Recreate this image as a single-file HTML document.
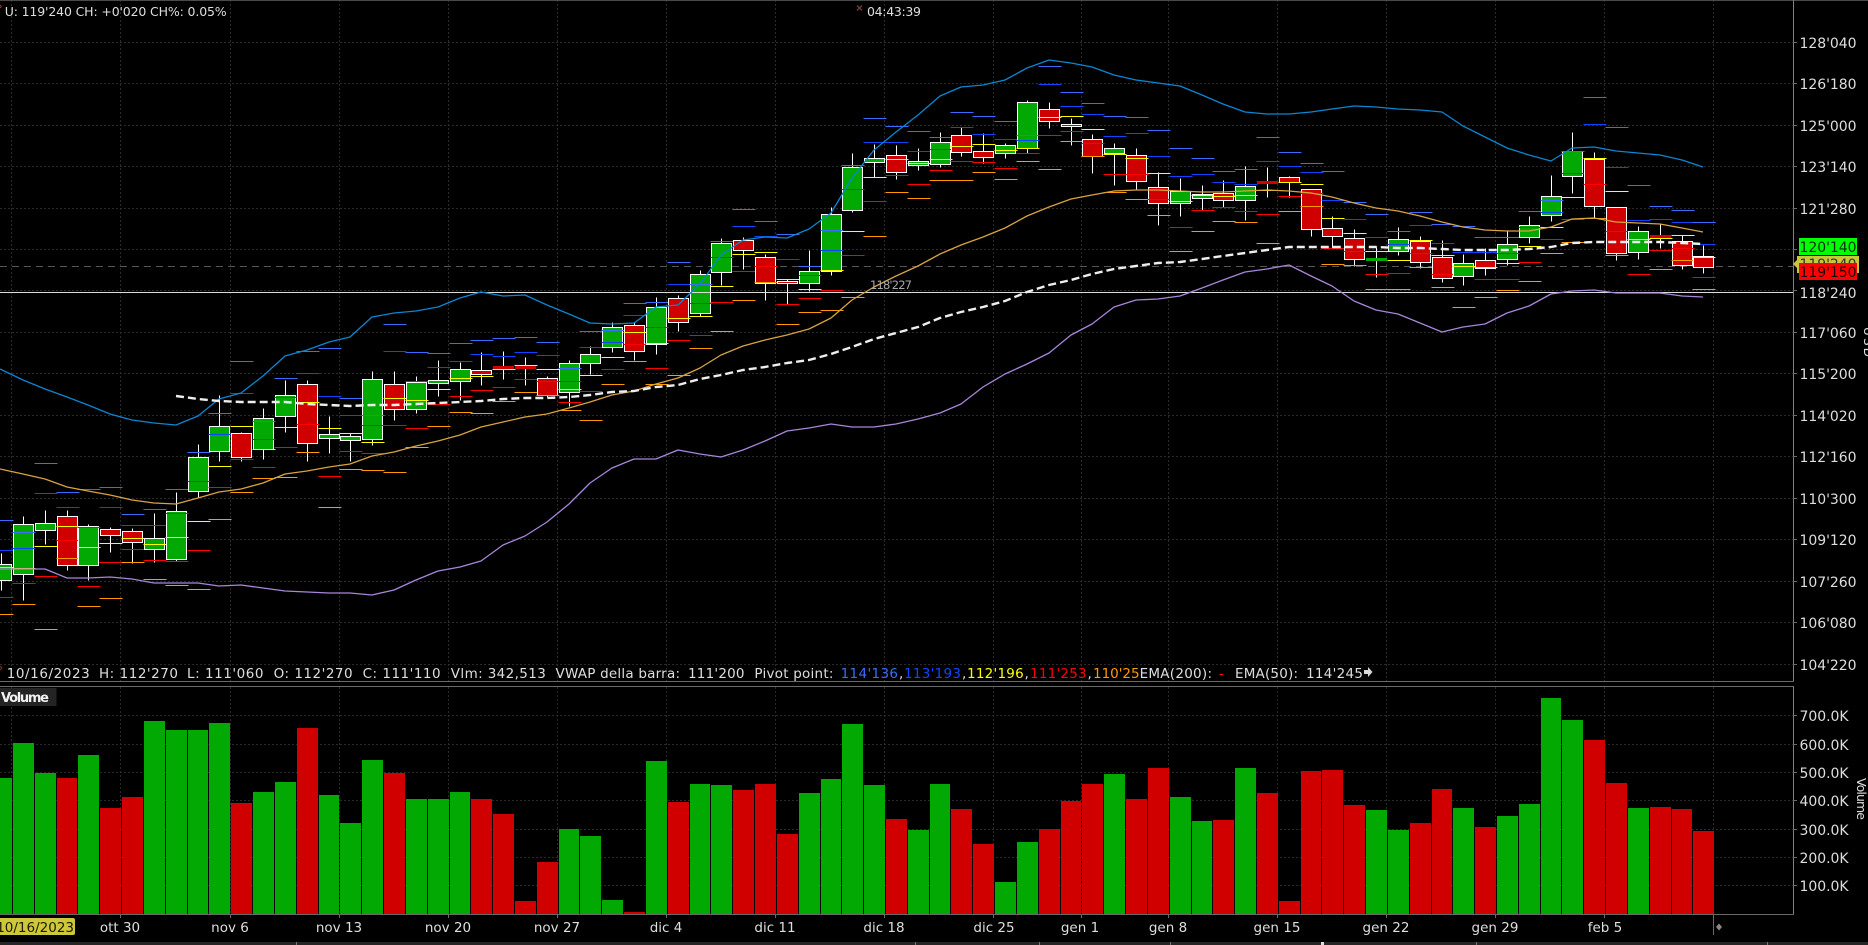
<!DOCTYPE html>
<html><head><meta charset="utf-8"><title>Chart</title>
<style>
html,body{margin:0;padding:0;background:#000;width:1868px;height:945px;overflow:hidden}
svg{position:absolute;left:0;top:0;display:block}
text{font-family:"DejaVu Sans","Liberation Sans",sans-serif;fill:#dedede;font-size:13.5px}
.gr path{stroke:#2b2b2b;stroke-width:1;stroke-dasharray:2 2;fill:none}
.cs{shape-rendering:crispEdges}
.cs path{fill:none;stroke-width:1}
.cs .w{stroke:#fff}
.cs .g{fill:#03a903;stroke:#fff}
.cs .r{fill:#d00000;stroke:#fff}
.cs .gf{fill:#03a903;stroke:#03a903}
.cs .rf{fill:#d00000;stroke:#d00000}
.cs .a{stroke:#3a6cff}
.cs .b{stroke:#0f45ff}
.cs .c{stroke:#ffff00}
.cs .d{stroke:#ff0000}
.cs .e{stroke:#ff9900}
.ax text{font-size:14px}
</style></head><body>
<svg width="1868" height="945" viewBox="0 0 1868 945" xmlns="http://www.w3.org/2000/svg">
<rect width="1868" height="945" fill="#000"/>
<!-- grid -->
<g class="gr">
<path d="M0 42.5H1793M0 83.5H1793M0 125.5H1793M0 166.5H1793M0 208.5H1793M0 249.5H1793M0 290.5H1793M0 332.5H1793M0 373.5H1793M0 415.5H1793M0 456.5H1793M0 498.5H1793M0 539.5H1793M0 581.5H1793M0 622.5H1793M0 664.5H1793"/>
<path d="M11.5 0V681M120.5 0V681M230.5 0V681M339.5 0V681M448.5 0V681M557.5 0V681M666.5 0V681M775.5 0V681M884.5 0V681M993.5 0V681M1081.5 0V681M1168.5 0V681M1277.5 0V681M1386.5 0V681M1495.5 0V681M1604.5 0V681M1713.5 0V681"/>
<path d="M0 715.5H1793M0 744.5H1793M0 772.5H1793M0 800.5H1793M0 829.5H1793M0 857.5H1793M0 885.5H1793"/>
<path d="M11.5 687V914M120.5 687V914M230.5 687V914M339.5 687V914M448.5 687V914M557.5 687V914M666.5 687V914M775.5 687V914M884.5 687V914M993.5 687V914M1081.5 687V914M1168.5 687V914M1277.5 687V914M1386.5 687V914M1495.5 687V914M1604.5 687V914M1713.5 687V914"/>
</g>
<path d="M0 266.5H1793" stroke="#555" stroke-width="1" stroke-dasharray="7 5" fill="none" shape-rendering="crispEdges"/>
<!-- candles -->
<g class="cs">
<g transform="translate(1.5 .5)"><path class="w" d="M0 553V590"/><path class="g" d="M-10 564h20v16h-20z"/><path class="a" d="M-11 520h23"/><path class="b" d="M-11 550h23"/><path class="c" d="M-11 567h23"/><path class="d" d="M-11 597h23"/><path class="e" d="M-11 614h23"/></g>
<g transform="translate(23.5 .5)"><path class="w" d="M0 516V600"/><path class="g" d="M-10 524h20v50h-20z"/><path class="a" d="M-11 532h23"/><path class="b" d="M-11 548h23"/><path class="c" d="M-11 568h23"/><path class="d" d="M-11 583h23"/><path class="e" d="M-11 604h23"/></g>
<g transform="translate(45.5 .5)"><path class="w" d="M0 510V544"/><path class="g" d="M-10 523h20v7h-20z"/><path class="a" d="M-11 463h23"/><path class="b" d="M-11 493h23"/><path class="c" d="M-11 546h23"/><path class="d" d="M-11 576h23"/><path class="e" d="M-11 629h23"/></g>
<g transform="translate(67.5 .5)"><path class="w" d="M0 510V570"/><path class="r" d="M-10 516h20v49h-20z"/><path class="a" d="M-11 492h23"/><path class="b" d="M-11 507h23"/><path class="c" d="M-11 526h23"/><path class="d" d="M-11 540h23"/><path class="e" d="M-11 558h23"/></g>
<g transform="translate(88.5 .5)"><path class="w" d="M0 524V580"/><path class="g" d="M-10 526h20v39h-20z"/><path class="a" d="M-11 489h23"/><path class="b" d="M-11 527h23"/><path class="c" d="M-11 547h23"/><path class="d" d="M-11 586h23"/><path class="e" d="M-11 606h23"/></g>
<g transform="translate(110.5 .5)"><path class="w" d="M0 527V552"/><path class="r" d="M-10 529h20v6h-20z"/><path class="a" d="M-11 487h23"/><path class="b" d="M-11 507h23"/><path class="c" d="M-11 543h23"/><path class="d" d="M-11 562h23"/><path class="e" d="M-11 598h23"/></g>
<g transform="translate(132.5 .5)"><path class="w" d="M0 528V563"/><path class="r" d="M-10 531h20v11h-20z"/><path class="a" d="M-11 514h23"/><path class="b" d="M-11 525h23"/><path class="c" d="M-11 538h23"/><path class="d" d="M-11 549h23"/><path class="e" d="M-11 562h23"/></g>
<g transform="translate(154.5 .5)"><path class="w" d="M0 513V562"/><path class="g" d="M-10 538h20v11h-20z"/><path class="a" d="M-11 509h23"/><path class="b" d="M-11 525h23"/><path class="c" d="M-11 544h23"/><path class="d" d="M-11 560h23"/><path class="e" d="M-11 579h23"/></g>
<g transform="translate(176.5 .5)"><path class="w" d="M0 492V561"/><path class="g" d="M-10 511h20v48h-20z"/><path class="a" d="M-11 489h23"/><path class="b" d="M-11 513h23"/><path class="c" d="M-11 537h23"/><path class="d" d="M-11 561h23"/><path class="e" d="M-11 585h23"/></g>
<g transform="translate(198.5 .5)"><path class="w" d="M0 444V498"/><path class="g" d="M-10 457h20v34h-20z"/><path class="a" d="M-11 452h23"/><path class="b" d="M-11 481h23"/><path class="c" d="M-11 521h23"/><path class="d" d="M-11 550h23"/><path class="e" d="M-11 589h23"/></g>
<g transform="translate(219.5 .5)"><path class="w" d="M0 395V461"/><path class="g" d="M-10 426h20v25h-20z"/><path class="a" d="M-11 413h23"/><path class="b" d="M-11 434h23"/><path class="c" d="M-11 466h23"/><path class="d" d="M-11 487h23"/><path class="e" d="M-11 519h23"/></g>
<g transform="translate(241.5 .5)"><path class="w" d="M0 432V461"/><path class="r" d="M-10 433h20v24h-20z"/><path class="a" d="M-11 361h23"/><path class="b" d="M-11 393h23"/><path class="c" d="M-11 426h23"/><path class="d" d="M-11 459h23"/><path class="e" d="M-11 492h23"/></g>
<g transform="translate(263.5 .5)"><path class="w" d="M0 408V459"/><path class="g" d="M-10 418h20v31h-20z"/><path class="a" d="M-11 421h23"/><path class="b" d="M-11 439h23"/><path class="c" d="M-11 449h23"/><path class="d" d="M-11 467h23"/><path class="e" d="M-11 478h23"/></g>
<g transform="translate(285.5 .5)"><path class="w" d="M0 380V432"/><path class="g" d="M-10 395h20v21h-20z"/><path class="a" d="M-11 378h23"/><path class="b" d="M-11 397h23"/><path class="c" d="M-11 427h23"/><path class="d" d="M-11 447h23"/><path class="e" d="M-11 477h23"/></g>
<g transform="translate(307.5 .5)"><path class="w" d="M0 380V461"/><path class="r" d="M-10 384h20v59h-20z"/><path class="a" d="M-11 351h23"/><path class="b" d="M-11 373h23"/><path class="c" d="M-11 402h23"/><path class="d" d="M-11 424h23"/><path class="e" d="M-11 452h23"/></g>
<g transform="translate(329.5 .5)"><path class="w" d="M0 416V453"/><path class="g" d="M-10 434h20v4h-20z"/><path class="a" d="M-11 348h23"/><path class="b" d="M-11 396h23"/><path class="c" d="M-11 428h23"/><path class="d" d="M-11 476h23"/><path class="e" d="M-11 507h23"/></g>
<g transform="translate(350.5 .5)"><path class="w" d="M0 433V461"/><path class="g" d="M-10 436h20v4h-20z"/><path class="a" d="M-11 398h23"/><path class="b" d="M-11 415h23"/><path class="c" d="M-11 433h23"/><path class="d" d="M-11 451h23"/><path class="e" d="M-11 469h23"/></g>
<g transform="translate(372.5 .5)"><path class="w" d="M0 371V445"/><path class="g" d="M-10 379h20v60h-20z"/><path class="a" d="M-11 415h23"/><path class="b" d="M-11 425h23"/><path class="c" d="M-11 442h23"/><path class="d" d="M-11 453h23"/><path class="e" d="M-11 470h23"/></g>
<g transform="translate(394.5 .5)"><path class="w" d="M0 371V420"/><path class="r" d="M-10 384h20v25h-20z"/><path class="a" d="M-11 324h23"/><path class="b" d="M-11 351h23"/><path class="c" d="M-11 398h23"/><path class="d" d="M-11 425h23"/><path class="e" d="M-11 472h23"/></g>
<g transform="translate(416.5 .5)"><path class="w" d="M0 376V413"/><path class="g" d="M-10 382h20v27h-20z"/><path class="a" d="M-11 352h23"/><path class="b" d="M-11 381h23"/><path class="c" d="M-11 400h23"/><path class="d" d="M-11 428h23"/><path class="e" d="M-11 447h23"/></g>
<g transform="translate(438.5 .5)"><path class="w" d="M0 360V396"/><path class="g" d="M-10 380h20v3h-20z"/><path class="a" d="M-11 353h23"/><path class="b" d="M-11 367h23"/><path class="c" d="M-11 389h23"/><path class="d" d="M-11 404h23"/><path class="e" d="M-11 426h23"/></g>
<g transform="translate(460.5 .5)"><path class="w" d="M0 362V400"/><path class="g" d="M-10 369h20v12h-20z"/><path class="a" d="M-11 343h23"/><path class="b" d="M-11 361h23"/><path class="c" d="M-11 378h23"/><path class="d" d="M-11 396h23"/><path class="e" d="M-11 412h23"/></g>
<g transform="translate(481.5 .5)"><path class="w" d="M0 352V385"/><path class="r" d="M-10 370h20v4h-20z"/><path class="a" d="M-11 340h23"/><path class="b" d="M-11 354h23"/><path class="c" d="M-11 376h23"/><path class="d" d="M-11 390h23"/><path class="e" d="M-11 413h23"/></g>
<g transform="translate(503.5 .5)"><path class="w" d="M0 351V379"/><path class="rf" d="M-10 366h20v2h-20z"/><path class="a" d="M-11 338h23"/><path class="b" d="M-11 356h23"/><path class="c" d="M-11 369h23"/><path class="d" d="M-11 387h23"/><path class="e" d="M-11 401h23"/></g>
<g transform="translate(525.5 .5)"><path class="w" d="M0 357V385"/><path class="rf" d="M-10 365h20v3h-20z"/><path class="a" d="M-11 337h23"/><path class="b" d="M-11 352h23"/><path class="c" d="M-11 365h23"/><path class="d" d="M-11 379h23"/><path class="e" d="M-11 392h23"/></g>
<g transform="translate(547.5 .5)"><path class="w" d="M0 376V397"/><path class="r" d="M-10 378h20v17h-20z"/><path class="a" d="M-11 342h23"/><path class="b" d="M-11 355h23"/><path class="c" d="M-11 369h23"/><path class="d" d="M-11 381h23"/><path class="e" d="M-11 395h23"/></g>
<g transform="translate(569.5 .5)"><path class="w" d="M0 360V406"/><path class="g" d="M-10 363h20v29h-20z"/><path class="a" d="M-11 368h23"/><path class="b" d="M-11 381h23"/><path class="c" d="M-11 389h23"/><path class="d" d="M-11 402h23"/><path class="e" d="M-11 410h23"/></g>
<g transform="translate(590.5 .5)"><path class="w" d="M0 346V374"/><path class="g" d="M-10 354h20v9h-20z"/><path class="a" d="M-11 331h23"/><path class="b" d="M-11 347h23"/><path class="c" d="M-11 375h23"/><path class="d" d="M-11 391h23"/><path class="e" d="M-11 420h23"/></g>
<g transform="translate(612.5 .5)"><path class="w" d="M0 322V352"/><path class="g" d="M-10 327h20v20h-20z"/><path class="a" d="M-11 330h23"/><path class="b" d="M-11 342h23"/><path class="c" d="M-11 357h23"/><path class="d" d="M-11 369h23"/><path class="e" d="M-11 384h23"/></g>
<g transform="translate(634.5 .5)"><path class="w" d="M0 322V360"/><path class="r" d="M-10 325h20v26h-20z"/><path class="a" d="M-11 303h23"/><path class="b" d="M-11 315h23"/><path class="c" d="M-11 332h23"/><path class="d" d="M-11 344h23"/><path class="e" d="M-11 361h23"/></g>
<g transform="translate(656.5 .5)"><path class="w" d="M0 297V354"/><path class="g" d="M-10 307h20v37h-20z"/><path class="a" d="M-11 302h23"/><path class="b" d="M-11 327h23"/><path class="c" d="M-11 343h23"/><path class="d" d="M-11 368h23"/><path class="e" d="M-11 384h23"/></g>
<g transform="translate(678.5 .5)"><path class="w" d="M0 295V331"/><path class="r" d="M-10 298h20v24h-20z"/><path class="a" d="M-11 262h23"/><path class="b" d="M-11 284h23"/><path class="c" d="M-11 318h23"/><path class="d" d="M-11 340h23"/><path class="e" d="M-11 375h23"/></g>
<g transform="translate(700.5 .5)"><path class="w" d="M0 270V316"/><path class="g" d="M-10 274h20v39h-20z"/><path class="a" d="M-11 284h23"/><path class="b" d="M-11 303h23"/><path class="c" d="M-11 316h23"/><path class="d" d="M-11 335h23"/><path class="e" d="M-11 348h23"/></g>
<g transform="translate(721.5 .5)"><path class="w" d="M0 238V285"/><path class="g" d="M-10 243h20v29h-20z"/><path class="a" d="M-11 241h23"/><path class="b" d="M-11 257h23"/><path class="c" d="M-11 286h23"/><path class="d" d="M-11 302h23"/><path class="e" d="M-11 331h23"/></g>
<g transform="translate(743.5 .5)"><path class="w" d="M0 237V269"/><path class="r" d="M-10 240h20v10h-20z"/><path class="a" d="M-11 209h23"/><path class="b" d="M-11 226h23"/><path class="c" d="M-11 254h23"/><path class="d" d="M-11 271h23"/><path class="e" d="M-11 300h23"/></g>
<g transform="translate(765.5 .5)"><path class="w" d="M0 254V300"/><path class="r" d="M-10 257h20v26h-20z"/><path class="a" d="M-11 221h23"/><path class="b" d="M-11 236h23"/><path class="c" d="M-11 252h23"/><path class="d" d="M-11 266h23"/><path class="e" d="M-11 282h23"/></g>
<g transform="translate(787.5 .5)"><path class="w" d="M0 279V304"/><path class="r" d="M-10 281h20v2h-20z"/><path class="a" d="M-11 234h23"/><path class="b" d="M-11 259h23"/><path class="c" d="M-11 279h23"/><path class="d" d="M-11 304h23"/><path class="e" d="M-11 324h23"/></g>
<g transform="translate(809.5 .5)"><path class="w" d="M0 250V291"/><path class="g" d="M-10 271h20v12h-20z"/><path class="a" d="M-11 266h23"/><path class="b" d="M-11 275h23"/><path class="c" d="M-11 289h23"/><path class="d" d="M-11 298h23"/><path class="e" d="M-11 312h23"/></g>
<g transform="translate(831.5 .5)"><path class="w" d="M0 207V275"/><path class="g" d="M-10 214h20v57h-20z"/><path class="a" d="M-11 230h23"/><path class="b" d="M-11 250h23"/><path class="c" d="M-11 270h23"/><path class="d" d="M-11 290h23"/><path class="e" d="M-11 310h23"/></g>
<g transform="translate(852.5 .5)"><path class="w" d="M0 153V212"/><path class="g" d="M-10 167h20v43h-20z"/><path class="a" d="M-11 165h23"/><path class="b" d="M-11 189h23"/><path class="c" d="M-11 231h23"/><path class="d" d="M-11 255h23"/><path class="e" d="M-11 297h23"/></g>
<g transform="translate(874.5 .5)"><path class="w" d="M0 144V177"/><path class="g" d="M-10 158h20v4h-20z"/><path class="a" d="M-11 118h23"/><path class="b" d="M-11 142h23"/><path class="c" d="M-11 177h23"/><path class="d" d="M-11 201h23"/><path class="e" d="M-11 236h23"/></g>
<g transform="translate(896.5 .5)"><path class="w" d="M0 145V179"/><path class="r" d="M-10 155h20v17h-20z"/><path class="a" d="M-11 126h23"/><path class="b" d="M-11 142h23"/><path class="c" d="M-11 159h23"/><path class="d" d="M-11 175h23"/><path class="e" d="M-11 192h23"/></g>
<g transform="translate(918.5 .5)"><path class="w" d="M0 148V170"/><path class="g" d="M-10 161h20v4h-20z"/><path class="a" d="M-11 131h23"/><path class="b" d="M-11 151h23"/><path class="c" d="M-11 163h23"/><path class="d" d="M-11 184h23"/><path class="e" d="M-11 198h23"/></g>
<g transform="translate(940.5 .5)"><path class="w" d="M0 132V167"/><path class="g" d="M-10 142h20v22h-20z"/><path class="a" d="M-11 137h23"/><path class="b" d="M-11 149h23"/><path class="c" d="M-11 159h23"/><path class="d" d="M-11 170h23"/><path class="e" d="M-11 180h23"/></g>
<g transform="translate(961.5 .5)"><path class="w" d="M0 127V156"/><path class="r" d="M-10 135h20v17h-20z"/><path class="a" d="M-11 112h23"/><path class="b" d="M-11 127h23"/><path class="c" d="M-11 146h23"/><path class="d" d="M-11 161h23"/><path class="e" d="M-11 180h23"/></g>
<g transform="translate(983.5 .5)"><path class="w" d="M0 133V163"/><path class="r" d="M-10 151h20v6h-20z"/><path class="a" d="M-11 116h23"/><path class="b" d="M-11 134h23"/><path class="c" d="M-11 144h23"/><path class="d" d="M-11 162h23"/><path class="e" d="M-11 172h23"/></g>
<g transform="translate(1005.5 .5)"><path class="w" d="M0 143V158"/><path class="g" d="M-10 145h20v8h-20z"/><path class="a" d="M-11 121h23"/><path class="b" d="M-11 139h23"/><path class="c" d="M-11 150h23"/><path class="d" d="M-11 168h23"/><path class="e" d="M-11 179h23"/></g>
<g transform="translate(1027.5 .5)"><path class="w" d="M0 100V153"/><path class="g" d="M-10 102h20v46h-20z"/><path class="a" d="M-11 135h23"/><path class="b" d="M-11 140h23"/><path class="c" d="M-11 148h23"/><path class="d" d="M-11 153h23"/><path class="e" d="M-11 161h23"/></g>
<g transform="translate(1049.5 .5)"><path class="w" d="M0 102V128"/><path class="r" d="M-10 109h20v12h-20z"/><path class="a" d="M-11 66h23"/><path class="b" d="M-11 84h23"/><path class="c" d="M-11 117h23"/><path class="d" d="M-11 135h23"/><path class="e" d="M-11 169h23"/></g>
<g transform="translate(1071.5 .5)"><path class="w" d="M0 118V145"/><path class="r" d="M-10 124h20v2h-20z"/><path class="a" d="M-11 92h23"/><path class="b" d="M-11 106h23"/><path class="c" d="M-11 116h23"/><path class="d" d="M-11 131h23"/><path class="e" d="M-11 141h23"/></g>
<g transform="translate(1092.5 .5)"><path class="w" d="M0 134V173"/><path class="r" d="M-10 139h20v17h-20z"/><path class="a" d="M-11 103h23"/><path class="b" d="M-11 114h23"/><path class="c" d="M-11 129h23"/><path class="d" d="M-11 143h23"/><path class="e" d="M-11 156h23"/></g>
<g transform="translate(1114.5 .5)"><path class="w" d="M0 143V185"/><path class="g" d="M-10 148h20v5h-20z"/><path class="a" d="M-11 116h23"/><path class="b" d="M-11 136h23"/><path class="c" d="M-11 154h23"/><path class="d" d="M-11 174h23"/><path class="e" d="M-11 192h23"/></g>
<g transform="translate(1136.5 .5)"><path class="w" d="M0 148V190"/><path class="r" d="M-10 155h20v26h-20z"/><path class="a" d="M-11 117h23"/><path class="b" d="M-11 133h23"/><path class="c" d="M-11 158h23"/><path class="d" d="M-11 174h23"/><path class="e" d="M-11 199h23"/></g>
<g transform="translate(1158.5 .5)"><path class="w" d="M0 172V225"/><path class="r" d="M-10 187h20v16h-20z"/><path class="a" d="M-11 130h23"/><path class="b" d="M-11 156h23"/><path class="c" d="M-11 173h23"/><path class="d" d="M-11 199h23"/><path class="e" d="M-11 215h23"/></g>
<g transform="translate(1180.5 .5)"><path class="w" d="M0 178V216"/><path class="g" d="M-10 191h20v12h-20z"/><path class="a" d="M-11 148h23"/><path class="b" d="M-11 176h23"/><path class="c" d="M-11 201h23"/><path class="d" d="M-11 227h23"/><path class="e" d="M-11 251h23"/></g>
<g transform="translate(1202.5 .5)"><path class="w" d="M0 185V210"/><path class="g" d="M-10 194h20v4h-20z"/><path class="a" d="M-11 158h23"/><path class="b" d="M-11 174h23"/><path class="c" d="M-11 195h23"/><path class="d" d="M-11 210h23"/><path class="e" d="M-11 231h23"/></g>
<g transform="translate(1223.5 .5)"><path class="w" d="M0 180V207"/><path class="r" d="M-10 193h20v7h-20z"/><path class="a" d="M-11 171h23"/><path class="b" d="M-11 182h23"/><path class="c" d="M-11 196h23"/><path class="d" d="M-11 207h23"/><path class="e" d="M-11 221h23"/></g>
<g transform="translate(1245.5 .5)"><path class="w" d="M0 166V220"/><path class="g" d="M-10 186h20v14h-20z"/><path class="a" d="M-11 169h23"/><path class="b" d="M-11 184h23"/><path class="c" d="M-11 195h23"/><path class="d" d="M-11 211h23"/><path class="e" d="M-11 222h23"/></g>
<g transform="translate(1267.5 .5)"><path class="w" d="M0 167V197"/><path class="rf" d="M-10 181h20v2h-20z"/><path class="a" d="M-11 137h23"/><path class="b" d="M-11 161h23"/><path class="c" d="M-11 190h23"/><path class="d" d="M-11 214h23"/><path class="e" d="M-11 243h23"/></g>
<g transform="translate(1289.5 .5)"><path class="w" d="M0 176V197"/><path class="r" d="M-10 177h20v5h-20z"/><path class="a" d="M-11 152h23"/><path class="b" d="M-11 166h23"/><path class="c" d="M-11 182h23"/><path class="d" d="M-11 196h23"/><path class="e" d="M-11 211h23"/></g>
<g transform="translate(1311.5 .5)"><path class="w" d="M0 189V236"/><path class="r" d="M-10 189h20v40h-20z"/><path class="a" d="M-11 163h23"/><path class="b" d="M-11 172h23"/><path class="c" d="M-11 184h23"/><path class="d" d="M-11 193h23"/><path class="e" d="M-11 206h23"/></g>
<g transform="translate(1332.5 .5)"><path class="w" d="M0 216V248"/><path class="r" d="M-10 228h20v8h-20z"/><path class="a" d="M-11 171h23"/><path class="b" d="M-11 200h23"/><path class="c" d="M-11 218h23"/><path class="d" d="M-11 248h23"/><path class="e" d="M-11 264h23"/></g>
<g transform="translate(1354.5 .5)"><path class="w" d="M0 229V266"/><path class="r" d="M-10 238h20v21h-20z"/><path class="a" d="M-11 202h23"/><path class="b" d="M-11 219h23"/><path class="c" d="M-11 233h23"/><path class="d" d="M-11 251h23"/><path class="e" d="M-11 265h23"/></g>
<g transform="translate(1376.5 .5)"><path class="w" d="M0 247V277"/><path class="gf" d="M-10 258h20v2h-20z"/><path class="a" d="M-11 214h23"/><path class="b" d="M-11 237h23"/><path class="c" d="M-11 251h23"/><path class="d" d="M-11 274h23"/><path class="e" d="M-11 289h23"/></g>
<g transform="translate(1398.5 .5)"><path class="w" d="M0 227V255"/><path class="g" d="M-10 239h20v12h-20z"/><path class="a" d="M-11 231h23"/><path class="b" d="M-11 244h23"/><path class="c" d="M-11 260h23"/><path class="d" d="M-11 273h23"/><path class="e" d="M-11 289h23"/></g>
<g transform="translate(1420.5 .5)"><path class="w" d="M0 236V268"/><path class="r" d="M-10 241h20v21h-20z"/><path class="a" d="M-11 212h23"/><path class="b" d="M-11 225h23"/><path class="c" d="M-11 240h23"/><path class="d" d="M-11 253h23"/><path class="e" d="M-11 267h23"/></g>
<g transform="translate(1442.5 .5)"><path class="w" d="M0 240V282"/><path class="r" d="M-10 257h20v21h-20z"/><path class="a" d="M-11 224h23"/><path class="b" d="M-11 243h23"/><path class="c" d="M-11 255h23"/><path class="d" d="M-11 274h23"/><path class="e" d="M-11 287h23"/></g>
<g transform="translate(1463.5 .5)"><path class="w" d="M0 254V285"/><path class="g" d="M-10 263h20v13h-20z"/><path class="a" d="M-11 226h23"/><path class="b" d="M-11 252h23"/><path class="c" d="M-11 266h23"/><path class="d" d="M-11 292h23"/><path class="e" d="M-11 307h23"/></g>
<g transform="translate(1485.5 .5)"><path class="w" d="M0 248V275"/><path class="r" d="M-10 260h20v8h-20z"/><path class="a" d="M-11 237h23"/><path class="b" d="M-11 252h23"/><path class="c" d="M-11 267h23"/><path class="d" d="M-11 279h23"/><path class="e" d="M-11 297h23"/></g>
<g transform="translate(1507.5 .5)"><path class="w" d="M0 230V265"/><path class="g" d="M-10 244h20v15h-20z"/><path class="a" d="M-11 237h23"/><path class="b" d="M-11 253h23"/><path class="c" d="M-11 263h23"/><path class="d" d="M-11 279h23"/><path class="e" d="M-11 290h23"/></g>
<g transform="translate(1529.5 .5)"><path class="w" d="M0 216V243"/><path class="g" d="M-10 225h20v12h-20z"/><path class="a" d="M-11 211h23"/><path class="b" d="M-11 227h23"/><path class="c" d="M-11 246h23"/><path class="d" d="M-11 262h23"/><path class="e" d="M-11 281h23"/></g>
<g transform="translate(1551.5 .5)"><path class="w" d="M0 175V221"/><path class="g" d="M-10 196h20v19h-20z"/><path class="a" d="M-11 200h23"/><path class="b" d="M-11 212h23"/><path class="c" d="M-11 227h23"/><path class="d" d="M-11 239h23"/><path class="e" d="M-11 253h23"/></g>
<g transform="translate(1572.5 .5)"><path class="w" d="M0 132V193"/><path class="g" d="M-10 151h20v25h-20z"/><path class="a" d="M-11 151h23"/><path class="b" d="M-11 173h23"/><path class="c" d="M-11 197h23"/><path class="d" d="M-11 219h23"/><path class="e" d="M-11 242h23"/></g>
<g transform="translate(1594.5 .5)"><path class="w" d="M0 152V217"/><path class="r" d="M-10 159h20v47h-20z"/><path class="a" d="M-11 97h23"/><path class="b" d="M-11 124h23"/><path class="c" d="M-11 158h23"/><path class="d" d="M-11 184h23"/><path class="e" d="M-11 218h23"/></g>
<g transform="translate(1616.5 .5)"><path class="w" d="M0 207V260"/><path class="r" d="M-10 207h20v46h-20z"/><path class="a" d="M-11 127h23"/><path class="b" d="M-11 167h23"/><path class="c" d="M-11 191h23"/><path class="d" d="M-11 231h23"/><path class="e" d="M-11 255h23"/></g>
<g transform="translate(1638.5 .5)"><path class="w" d="M0 226V259"/><path class="g" d="M-10 231h20v21h-20z"/><path class="a" d="M-11 185h23"/><path class="b" d="M-11 220h23"/><path class="c" d="M-11 239h23"/><path class="d" d="M-11 274h23"/></g>
<g transform="translate(1660.5 .5)"><path class="w" d="M0 223V248"/><path class="rf" d="M-10 235h20v2h-20z"/><path class="a" d="M-11 206h23"/><path class="b" d="M-11 219h23"/><path class="c" d="M-11 238h23"/><path class="d" d="M-11 250h23"/><path class="e" d="M-11 269h23"/></g>
<g transform="translate(1682.5 .5)"><path class="w" d="M0 235V269"/><path class="r" d="M-10 241h20v24h-20z"/><path class="a" d="M-11 210h23"/><path class="b" d="M-11 222h23"/><path class="c" d="M-11 235h23"/><path class="d" d="M-11 248h23"/><path class="e" d="M-11 260h23"/></g>
<g transform="translate(1703.5 .5)"><path class="w" d="M0 245V273"/><path class="r" d="M-10 256h20v11h-20z"/><path class="a" d="M-11 222h23"/><path class="b" d="M-11 244h23"/><path class="c" d="M-11 257h23"/><path class="d" d="M-11 277h23"/><path class="e" d="M-11 289h23"/></g>
</g>
<!-- horizontal white line -->
<path d="M0 292.5H1793" stroke="#dcdcdc" stroke-width="1" shape-rendering="crispEdges"/>
<!-- indicators -->
<g fill="none" stroke-linejoin="round">
<polyline stroke="#0a86d2" stroke-width="1.3" points="0,369 23,380 45,389 67,397 88,405 110,414 132,420 154,423 176,425 198,416 219,399 241,393 263,376 285,356 307,350 329,342 350,337 372,317 394,313 416,311 438,307 460,298 481,292 503,296 525,295 547,305 569,314 590,323 612,324 634,323 656,307 678,305 700,284 721,255 743,240 765,237 787,238 809,229 831,213 852,178 874,150 896,132 918,115 940,96 961,87 983,85 1005,80 1027,68 1049,60 1071,63 1092,67 1114,75 1136,80 1158,83 1180,86 1202,95 1223,104 1245,112 1267,114 1289,114 1311,112 1332,109 1354,106 1376,107 1398,109 1420,110 1442,112 1463,126 1485,137 1507,148 1529,155 1551,161 1572,148 1594,147 1616,151 1638,153 1660,155 1682,160 1703,167"/>
<polyline stroke="#d8a33f" stroke-width="1.3" points="0,469 23,474 45,479 67,487 88,491 110,495 132,500 154,503 176,504 198,498 219,492 241,489 263,483 285,474 307,471 329,467 350,464 372,456 394,452 416,446 438,441 460,435 481,427 503,422 525,417 547,414 569,408 590,402 612,395 634,391 656,384 678,378 700,368 721,355 743,346 765,340 787,335 809,329 831,318 852,300 874,287 896,276 918,266 940,254 961,245 983,237 1005,228 1027,216 1049,207 1071,199 1092,195 1114,191 1136,190 1158,190 1180,191 1202,192 1223,192 1245,191 1267,190 1289,191 1311,193 1332,197 1354,203 1376,208 1398,211 1420,216 1442,222 1463,227 1485,230 1507,231 1529,231 1551,227 1572,219 1594,218 1616,222 1638,223 1660,224 1682,228 1703,232"/>
<polyline stroke="#a885da" stroke-width="1.3" points="0,569 23,569 45,569 67,578 88,578 110,577 132,579 154,583 176,583 198,583 219,586 241,585 263,588 285,591 307,592 329,593 350,593 372,595 394,590 416,580 438,571 460,567 481,561 503,545 525,536 547,522 569,504 590,483 612,468 634,459 656,459 678,450 700,454 721,457 743,450 765,441 787,431 809,428 831,424 852,427 874,427 896,424 918,419 940,413 961,404 983,387 1005,374 1027,364 1049,353 1071,335 1092,324 1114,307 1136,300 1158,299 1180,296 1202,288 1223,280 1245,272 1267,269 1289,265 1311,276 1332,286 1354,301 1376,310 1398,314 1420,323 1442,332 1463,327 1485,324 1507,313 1529,306 1551,294 1572,291 1594,290 1616,293 1638,293 1660,293 1682,296 1703,297"/>
<polyline stroke="#eeeeee" stroke-width="2.4" stroke-dasharray="8 4" points="176,396 198,399 219,401 241,402 263,402 285,402 307,404 329,405 350,406 372,405 394,405 416,404 438,403 460,402 481,401 503,399 525,398 547,398 569,397 590,395 612,392 634,391 656,387 678,385 700,379 721,375 743,370 765,367 787,363 809,360 831,354 852,347 874,339 896,333 918,327 940,318 961,312 983,307 1005,301 1027,292 1049,285 1071,280 1092,274 1114,269 1136,266 1158,263 1180,262 1202,259 1223,256 1245,253 1267,250 1289,247 1311,247 1332,247 1354,247 1376,247 1398,248 1420,248 1442,249 1463,250 1485,250 1507,250 1529,249 1551,247 1572,243 1594,242 1616,242 1638,242 1660,242 1682,243 1703,244"/>
</g>
<!-- volume bars -->
<path fill="#03a903" shape-rendering="crispEdges" d="M-9 778h21V914h-21zM13 743h21V914h-21zM35 773h21V914h-21zM78 755h21V914h-21zM144 721h21V914h-21zM166 730h21V914h-21zM188 730h20V914h-20zM209 723h21V914h-21zM253 792h21V914h-21zM275 782h21V914h-21zM319 795h20V914h-20zM340 823h21V914h-21zM362 760h21V914h-21zM406 799h21V914h-21zM428 799h21V914h-21zM450 792h20V914h-20zM559 829h20V914h-20zM580 836h21V914h-21zM602 900h21V914h-21zM646 761h21V914h-21zM690 784h20V914h-20zM711 785h21V914h-21zM799 793h21V914h-21zM821 779h20V914h-20zM842 724h21V914h-21zM864 785h21V914h-21zM908 830h21V914h-21zM930 784h20V914h-20zM995 882h21V914h-21zM1017 842h21V914h-21zM1104 774h21V914h-21zM1170 797h21V914h-21zM1192 821h20V914h-20zM1235 768h21V914h-21zM1366 810h21V914h-21zM1388 830h21V914h-21zM1453 808h21V914h-21zM1497 816h21V914h-21zM1519 804h21V914h-21zM1541 698h20V914h-20zM1562 720h21V914h-21zM1628 808h21V914h-21z"/>
<path fill="#d00000" shape-rendering="crispEdges" d="M57 778h20V914h-20zM100 808h21V914h-21zM122 797h21V914h-21zM231 803h21V914h-21zM297 728h21V914h-21zM384 773h21V914h-21zM471 799h21V914h-21zM493 814h21V914h-21zM515 901h21V914h-21zM537 862h21V914h-21zM624 912h21V914h-21zM668 802h21V914h-21zM733 790h21V914h-21zM755 784h21V914h-21zM777 834h21V914h-21zM886 819h21V914h-21zM951 809h21V914h-21zM973 844h21V914h-21zM1039 829h21V914h-21zM1061 801h20V914h-20zM1082 784h21V914h-21zM1126 799h21V914h-21zM1148 768h21V914h-21zM1213 820h21V914h-21zM1257 793h21V914h-21zM1279 901h21V914h-21zM1301 771h20V914h-20zM1322 770h21V914h-21zM1344 805h21V914h-21zM1410 823h21V914h-21zM1432 789h20V914h-20zM1475 827h21V914h-21zM1584 740h21V914h-21zM1606 783h21V914h-21zM1650 807h21V914h-21zM1672 809h20V914h-20zM1693 831h21V914h-21z"/>
<!-- frame -->
<g stroke="#6a6a6a" stroke-width="1" fill="none" shape-rendering="crispEdges">
<path d="M0 .5H1868" stroke="#4a4a4a"/>
<path d="M0 681.5H1793.5M0 686.5H1793.5M0 914.5H1793.5" />
<path d="M1793.5 0V681.5M1793.5 686V914.5" stroke="#808080"/>
<path d="M1793 42.5h4M1793 83.5h4M1793 125.5h4M1793 166.5h4M1793 208.5h4M1793 249.5h4M1793 290.5h4M1793 332.5h4M1793 373.5h4M1793 415.5h4M1793 456.5h4M1793 498.5h4M1793 539.5h4M1793 581.5h4M1793 622.5h4M1793 664.5h4M1793 715.5h4M1793 744.5h4M1793 772.5h4M1793 800.5h4M1793 829.5h4M1793 857.5h4M1793 885.5h4"/>
<path d="M120.5 914v4M230.5 914v4M339.5 914v4M448.5 914v4M557.5 914v4M666.5 914v4M775.5 914v4M884.5 914v4M993.5 914v4M1081.5 914v4M1168.5 914v4M1277.5 914v4M1386.5 914v4M1495.5 914v4M1604.5 914v4M1713.5 914V935"/>
</g>
<!-- price axis labels -->
<g class="ax">
<text x="1799.5" y="48" textLength="57">128'040</text>
<text x="1799.5" y="89" textLength="57">126'180</text>
<text x="1799.5" y="131" textLength="57">125'000</text>
<text x="1799.5" y="172" textLength="57">123'140</text>
<text x="1799.5" y="214" textLength="57">121'280</text>
<text x="1799.5" y="298" textLength="57">118'240</text>
<text x="1799.5" y="338" textLength="57">117'060</text>
<text x="1799.5" y="379" textLength="57">115'200</text>
<text x="1799.5" y="421" textLength="57">114'020</text>
<text x="1799.5" y="462" textLength="57">112'160</text>
<text x="1799.5" y="504" textLength="57">110'300</text>
<text x="1799.5" y="545" textLength="57">109'120</text>
<text x="1799.5" y="587" textLength="57">107'260</text>
<text x="1799.5" y="628" textLength="57">106'080</text>
<text x="1799.5" y="670" textLength="57">104'220</text>
<text x="1799.5" y="721" textLength="49">700.0K</text>
<text x="1799.5" y="750" textLength="49">600.0K</text>
<text x="1799.5" y="778" textLength="49">500.0K</text>
<text x="1799.5" y="806" textLength="49">400.0K</text>
<text x="1799.5" y="835" textLength="49">300.0K</text>
<text x="1799.5" y="863" textLength="49">200.0K</text>
<text x="1799.5" y="891" textLength="49">100.0K</text>
</g>
<!-- price flags -->
<rect x="1799" y="238" width="58" height="17" fill="#00ff00"/>
<text x="1799.5" y="252" textLength="57" style="fill:#003300;font-size:14px">120'140</text>
<path d="M1793 264L1797 260V256H1859V273H1797V268Z" fill="#c8c83a"/>
<text x="1799.5" y="269" textLength="57" style="fill:#333;font-size:14px">119'240</text>
<rect x="1799" y="263" width="58" height="17" fill="#ff0000"/>
<text x="1799.5" y="277" textLength="57" style="fill:#220000;font-size:14px">119'150</text>
<!-- rotated axis titles -->
<text transform="translate(1864 327) rotate(90)" textLength="30" style="font-size:12px">USD</text>
<text transform="translate(1857 778) rotate(90)" textLength="42" style="font-size:12.5px">Volume</text>
<!-- top text -->
<text x="4.7" y="16" textLength="222" style="font-size:12.5px">U: 119'240 CH: +0'020 CH%: 0.05%</text>
<path d="M0 5l1.5 1.5M1.5 6.5L0 8" stroke="#a33" fill="none"/>
<path d="M857 5.5l5 5M862 5.5l-5 5" stroke="#6b3a3a" stroke-width="1.5" fill="none"/>
<text x="867" y="16" textLength="54" style="font-size:12.5px">04:43:39</text>
<text x="870" y="289" textLength="42" style="font-size:11.5px;fill:#a8a8a8">118'227</text>
<!-- info line -->
<g>
<path d="M0 666l2 2-2 2" stroke="#733" fill="none"/>
<text x="6.7" y="678" textLength="83">10/16/2023</text>
<text x="99" y="678" textLength="79">H: 112'270</text>
<text x="187" y="678" textLength="76.5">L: 111'060</text>
<text x="273.6" y="678" textLength="79">O: 112'270</text>
<text x="362.6" y="678" textLength="78">C: 111'110</text>
<text x="450.8" y="678" textLength="95">Vlm: 342,513</text>
<text x="555.5" y="678" textLength="124.5">VWAP della barra:</text>
<text x="688" y="678" textLength="56.5">111'200</text>
<text x="754.4" y="678" textLength="79">Pivot point:</text>
<text x="840.6" y="678" textLength="57.4" style="fill:#3a6cff">114'136</text>
<text x="899" y="678">,</text>
<text x="904" y="678" textLength="57" style="fill:#0f45ff">113'193</text>
<text x="962" y="678">,</text>
<text x="967" y="678" textLength="56.7" style="fill:#ffff00">112'196</text>
<text x="1024.5" y="678">,</text>
<text x="1030" y="678" textLength="56.6" style="fill:#ff0000">111'253</text>
<text x="1087.5" y="678">,</text>
<text x="1093" y="678" textLength="46.6" style="fill:#ff9900">110'25</text>
<text x="1139.6" y="678" textLength="72.4">EMA(200):</text>
<text x="1219" y="678" style="fill:#ff0000">-</text>
<text x="1235" y="678" textLength="63">EMA(50):</text>
<text x="1306" y="678" textLength="57">114'245</text>
<path d="M1364 670h4v-3l4.5 5-4.500 5v-3h-4z" fill="#d8d8d8"/>
</g>
<!-- Volume label -->
<rect x="0" y="688" width="56.5" height="18" fill="#242424"/>
<text x="1" y="702" textLength="48" style="font-size:13px;font-weight:bold;fill:#f2f2f2">Volume</text>
<!-- date labels -->
<g style="text-anchor:middle">
<text x="120" y="932">ott 30</text>
<text x="230" y="932">nov 6</text>
<text x="339" y="932">nov 13</text>
<text x="448" y="932">nov 20</text>
<text x="557" y="932">nov 27</text>
<text x="666" y="932">dic 4</text>
<text x="775" y="932">dic 11</text>
<text x="884" y="932">dic 18</text>
<text x="994" y="932">dic 25</text>
<text x="1080" y="932">gen 1</text>
<text x="1168" y="932">gen 8</text>
<text x="1277" y="932">gen 15</text>
<text x="1386" y="932">gen 22</text>
<text x="1495" y="932">gen 29</text>
<text x="1605" y="932">feb 5</text>
</g>
<path d="M0 918H73a2 2 0 0 1 2 2V933a2 2 0 0 1-2 2H0Z" fill="#cdc83a"/>
<text x="74" y="932" style="text-anchor:end;fill:#1c1c00">10/16/2023</text>
<path d="M1716 927l3-3.500 3 3.500-3 3.500z" fill="#888"/>
<!-- bottom strip -->
<rect x="0" y="942" width="1868" height="3" fill="#262626"/>
<path d="M296.500 942v3M915.500 942v3M1039.500 942v3M1170.500 942v3M1476.500 942v3M1767.500 942v3" stroke="#777" stroke-width="1"/>
<rect x="1321" y="942" width="3" height="3" fill="#ddd"/>
</svg>
</body></html>
